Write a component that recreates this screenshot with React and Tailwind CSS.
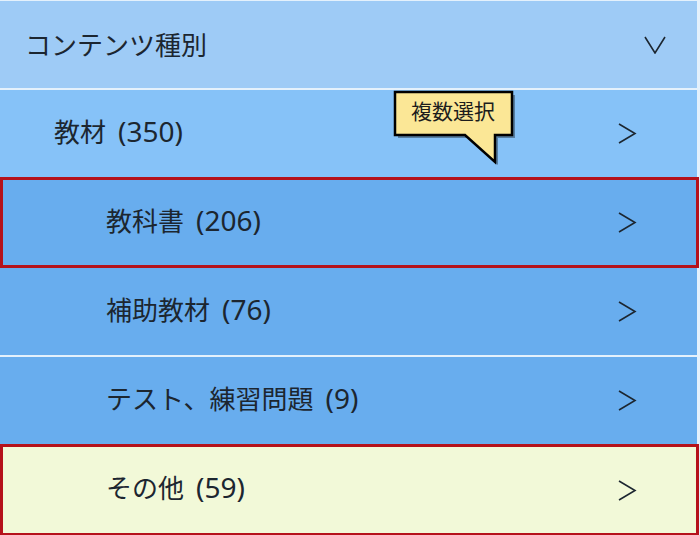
import React from "react";

const rows = [
  { name: "教材", count: 350, level: 1 },
  { name: "教科書", count: 206, level: 2, marked: true },
  { name: "補助教材", count: 76, level: 2 },
  { name: "テスト、練習問題", count: 9, level: 2 },
  { name: "その他", count: 59, level: 2, marked: true, other: true },
];

function ChevronRight() {
  return (
    <svg width="19" height="21" viewBox="0 0 19 21" fill="none">
      <polyline points="1,1 17,10.5 1,20" stroke="#1c2630" strokeWidth="1.6" />
    </svg>
  );
}

function ChevronDown() {
  return (
    <svg width="22" height="18" viewBox="0 0 22 18" fill="none">
      <polyline points="1,1 11,17 21,1" stroke="#1c2630" strokeWidth="1.6" />
    </svg>
  );
}

function Label({ name, count }) {
  return (
    <span className="flex items-baseline pb-[6px]">
      <span className="text-[26px] leading-[34px]">{name}</span>
      <span
        className="ml-[12px] text-[28px] leading-[34px]"
        style={{ fontFamily: '"Noto Sans", sans-serif' }}
      >
        ({count})
      </span>
    </span>
  );
}

function Tooltip() {
  // speech bubble lying over the first row
  return (
    <div className="absolute left-[390px] top-[88px] h-[80px] w-[130px]">
      <svg width="130" height="80" viewBox="0 0 130 80" className="absolute inset-0">
        <path d="M8 7 H125 V50 H108 V77 L78 50 H8 Z" fill="rgba(0,0,0,0.35)" />
        <path
          d="M5 4 H122 V47 H105 V74 L75 47 H5 Z"
          fill="#fbe796"
          stroke="#000"
          strokeWidth="2.5"
        />
      </svg>
      <span className="absolute left-[21px] top-[8px] text-[21px] leading-[28px] text-[#1c1c1c]">
        複数選択
      </span>
    </div>
  );
}

export default function App() {
  return (
    <div
      className="relative h-[535px] w-[700px] overflow-hidden bg-[#e4f1fc] pt-px text-[#1c2630]"
      style={{ fontFamily: '"Noto Sans CJK JP", "Noto Sans", sans-serif' }}
    >
      <div className="flex h-[87px] w-[697px] items-center justify-between bg-[#9ecbf6] pl-[25px] pr-[31px]">
        <span className="pb-[3px] text-[26px]">コンテンツ種別</span>
        <ChevronDown />
      </div>
      <div className="h-[2px] w-[697px] bg-[#e4f1fc]" />

      {rows.map((row, i) => {
        const bg = row.other
          ? "bg-[#f2f9d8]"
          : row.level === 1
          ? "bg-[#86c2f8]"
          : "bg-[#68adee]";
        if (row.marked) {
          return (
            <div
              key={i}
              className={`flex w-[699px] items-center justify-between border-[3px] border-[#b5121b] pl-[103px] pr-[59px] ${bg} ${
                row.other ? "h-[92px]" : "h-[91px]"
              }`}
            >
              <Label name={row.name} count={row.count} />
              <ChevronRight />
            </div>
          );
        }
        return (
          <React.Fragment key={i}>
            <div
              className={`flex h-[87px] w-[697px] items-center justify-between pr-[60px] ${bg} ${
                row.level === 1 ? "pl-[54px]" : "pl-[106px]"
              }`}
            >
              <Label name={row.name} count={row.count} />
              <ChevronRight />
            </div>
            {i === 2 && <div className="h-[2px] w-[697px] bg-[#e4f1fc]" />}
          </React.Fragment>
        );
      })}

      <Tooltip />
    </div>
  );
}
